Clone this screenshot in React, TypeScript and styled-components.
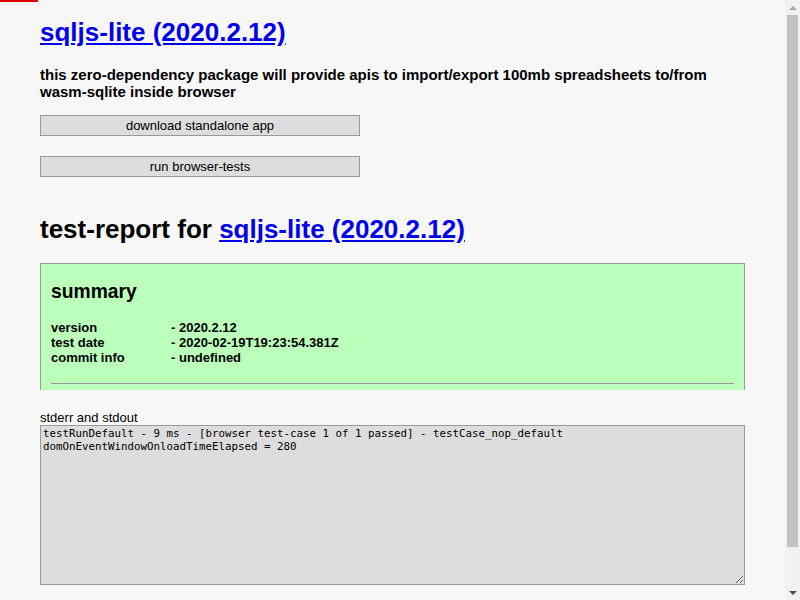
import { createGlobalStyle } from 'styled-components';
import styled from 'styled-components';

const GlobalStyle = createGlobalStyle`
  html {
    background: #f7f7f7;
  }
  body {
    margin: 0;
    padding: 0 55px 40px 40px;
    background: #f7f7f7;
    font-family: "Liberation Sans", Arial, sans-serif;
    color: #000;
  }
`;

const LoadingBar = styled.div`
  position: absolute;
  top: 0;
  left: 0;
  width: 38px;
  height: 2px;
  background: #d00;
`;

// the page scrolls in the reference; headless hides the real bar, so draw it
const Scrollbar = styled.div`
  position: fixed;
  top: 0;
  right: 0;
  width: 15px;
  height: 100%;
  background: #f1f1f1;
  display: flex;
  flex-direction: column;
  align-items: center;
`;

const Arrow = styled.div<{ $down?: boolean; $color: string }>`
  height: 15px;
  display: flex;
  align-items: center;
  justify-content: center;

  &::before {
    content: '';
    border-left: 4px solid transparent;
    border-right: 4px solid transparent;
    ${(p) => (p.$down ? `border-top: 4px solid ${p.$color};` : `border-bottom: 4px solid ${p.$color};`)}
  }
`;

const Thumb = styled.div`
  width: 11px;
  height: 532px;
  background: #c1c1c1;
`;

const Track = styled.div`
  flex: 1;
`;

const Title = styled.h1<{ $top: number }>`
  margin: ${(p) => p.$top}px 0 0;
  font-size: 26px;
  line-height: 30px;
  font-weight: bold;
`;

const Link = styled.a`
  color: #00e;
  text-decoration: underline;
`;

const Subtitle = styled.h3`
  margin: 19px 0 0;
  font-size: 15px;
  line-height: 17px;
  font-weight: bold;
`;

const ButtonList = styled.div`
  display: flex;
  flex-direction: column;
  gap: 20px;
  margin-top: 15px;
`;

const Button = styled.button`
  box-sizing: border-box;
  width: 320px;
  height: 21px;
  padding: 0;
  border: 1px solid #999;
  background: #ddd;
  color: #000;
  font-family: "Liberation Sans", Arial, sans-serif;
  font-size: 13px;
  line-height: 19px;
  cursor: pointer;
`;

const SummaryBox = styled.div`
  margin-top: 19px;
  padding: 10px 10px 6px;
  background: #bfb;
  border: 1px solid #999;
  border-bottom: none;
`;

const SummaryTitle = styled.h2`
  margin: 7px 0 0;
  font-size: 19.3px;
  line-height: 22px;
  font-weight: bold;
`;

const InfoTable = styled.table`
  margin-top: 17px;
  border-collapse: collapse;
  font-size: 13px;
  line-height: 15px;
  font-weight: bold;

  td {
    padding: 0;
  }
  td:first-child {
    width: 120px;
  }
`;

const Rule = styled.hr`
  margin: 18px 0 0;
  border: none;
  border-top: 1px solid #999;
  height: 0;
`;

const OutputLabel = styled.div`
  margin-top: 20px;
  font-size: 13px;
  line-height: 15px;
`;

const Output = styled.textarea`
  display: block;
  box-sizing: border-box;
  width: 100%;
  height: 160px;
  margin: 0;
  padding: 1px 2px;
  border: 1px solid #999;
  background: #ddd;
  color: #000;
  font-family: "DejaVu Sans Mono", "Liberation Mono", monospace;
  font-size: 10.8px;
  line-height: 13px;
  outline: none;
`;

const rows = [
  ['version', '- 2020.2.12'],
  ['test date', '- 2020-02-19T19:23:54.381Z'],
  ['commit info', '- undefined'],
];

const log =
  'testRunDefault - 9 ms - [browser test-case 1 of 1 passed] - testCase_nop_default\ndomOnEventWindowOnloadTimeElapsed = 280';

export default function App() {
  return (
    <>
      <GlobalStyle />
      <LoadingBar />
      <Scrollbar>
        <Arrow $color="#a3a3a3" />
        <Thumb />
        <Track />
        <Arrow $down $color="#505050" />
      </Scrollbar>
      <Title $top={17}>
        <Link href="#">sqljs-lite (2020.2.12)</Link>
      </Title>
      <Subtitle>
        this zero-dependency package will provide apis to import/export 100mb spreadsheets to/from
        wasm-sqlite inside browser
      </Subtitle>
      <ButtonList>
        <Button>download standalone app</Button>
        <Button>run browser-tests</Button>
      </ButtonList>
      <Title $top={37}>
        test-report for <Link href="#">sqljs-lite (2020.2.12)</Link>
      </Title>
      <SummaryBox>
        <SummaryTitle>summary</SummaryTitle>
        <InfoTable>
          <tbody>
            {rows.map(([k, v]) => (
              <tr key={k}>
                <td>{k}</td>
                <td>{v}</td>
              </tr>
            ))}
          </tbody>
        </InfoTable>
        <Rule />
      </SummaryBox>
      <OutputLabel>stderr and stdout</OutputLabel>
      <Output readOnly value={log} />
    </>
  );
}
